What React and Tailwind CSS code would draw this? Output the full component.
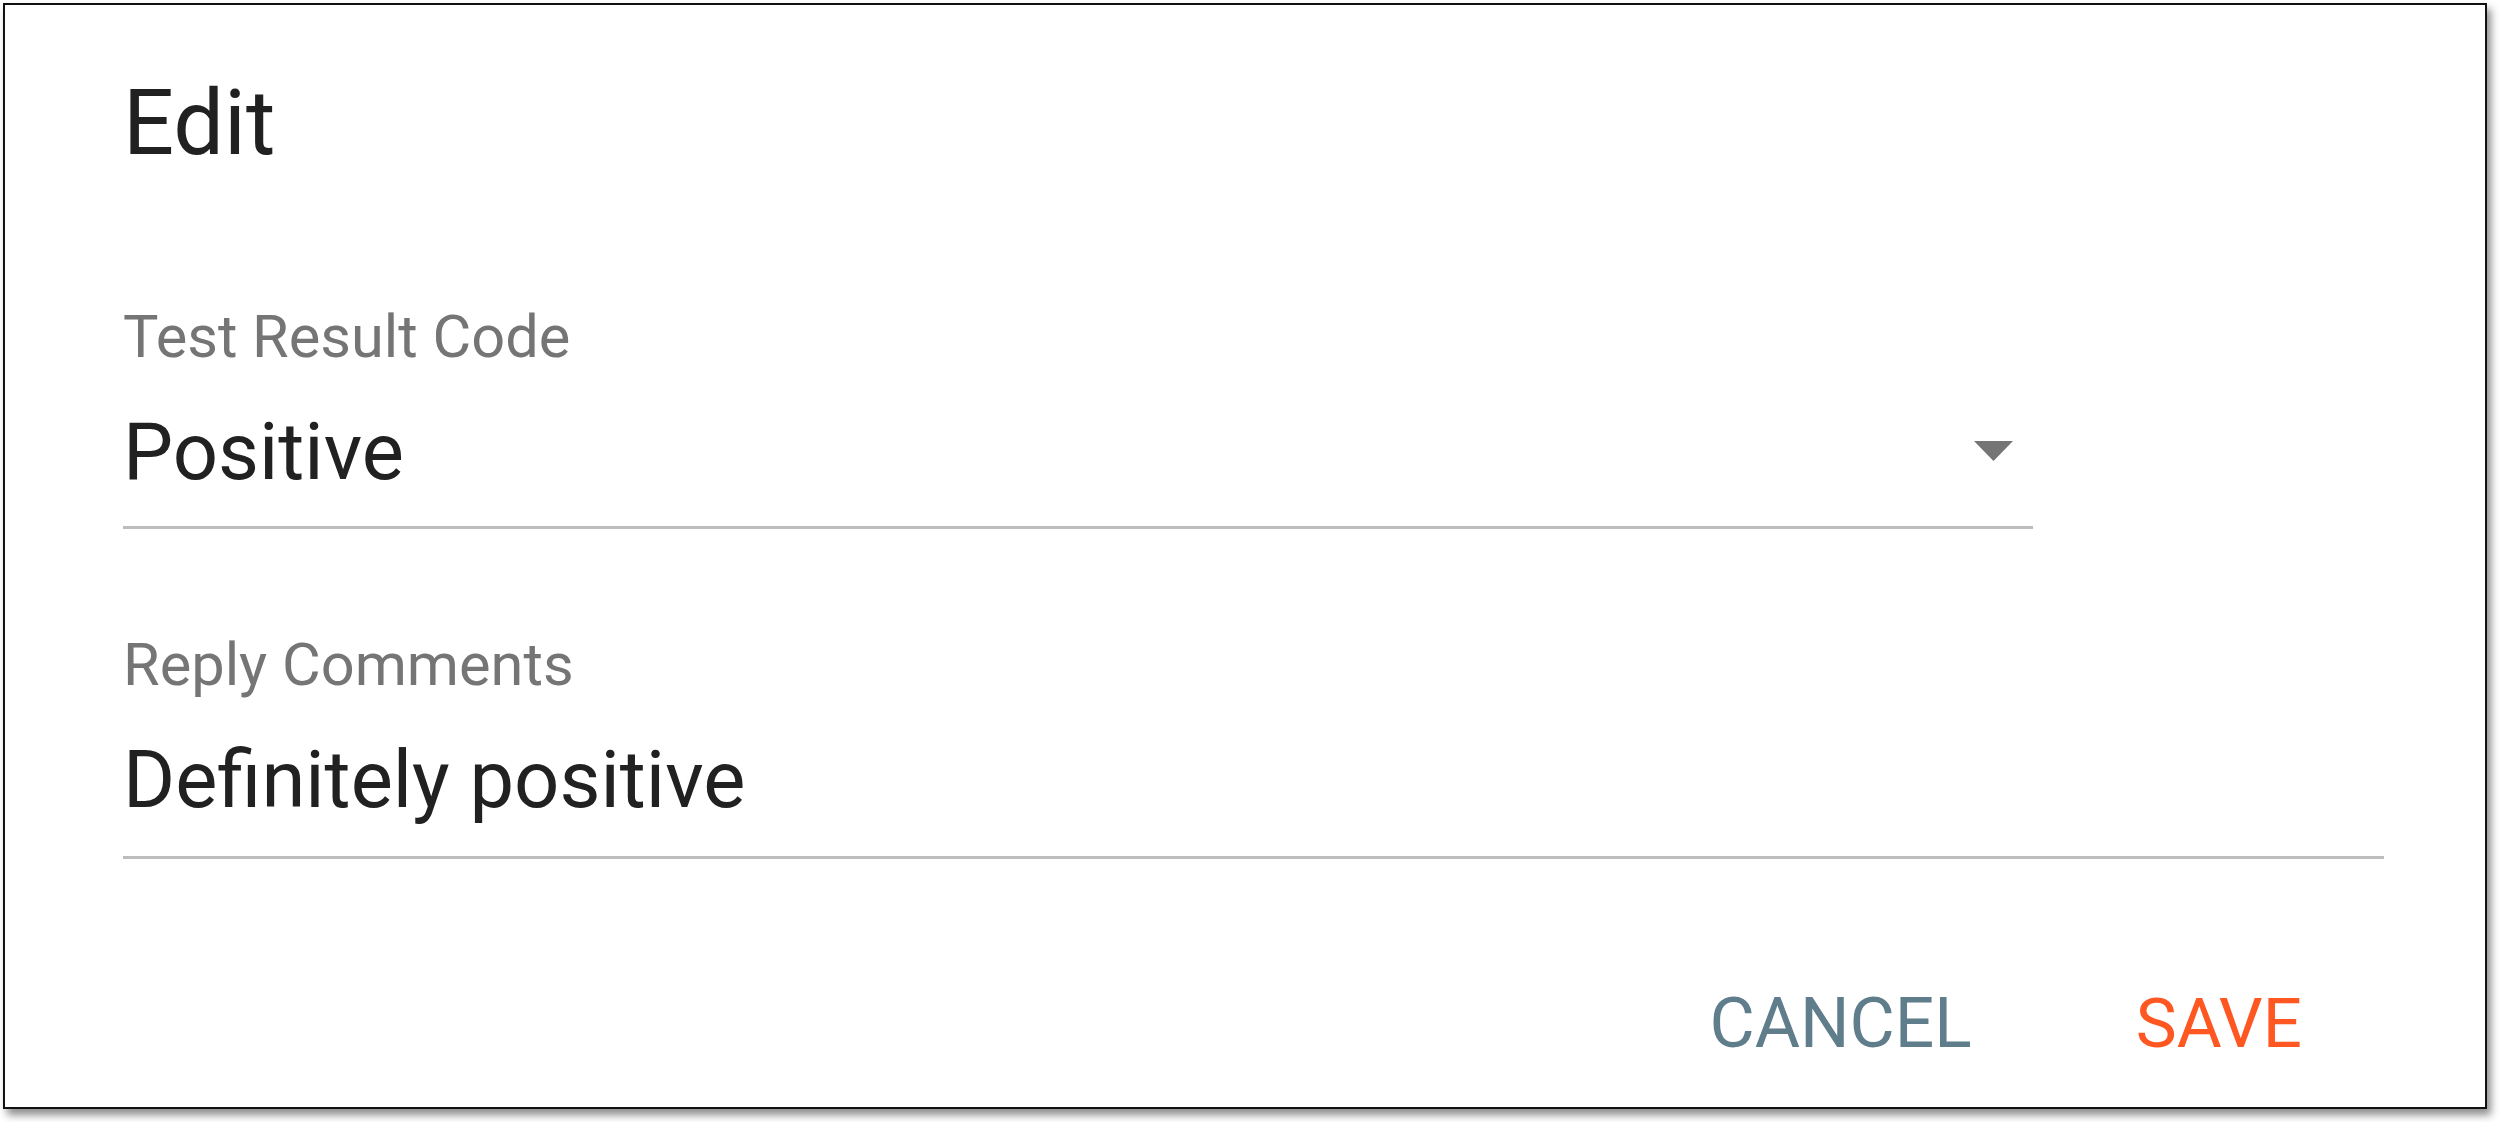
export default function App() {
  return (
    <div className="w-[2500px] h-[1122px] bg-white pl-[3px] pt-[3px] font-['Roboto',sans-serif]">
      <div className="w-[2484px] h-[1106px] border-2 border-[#111] bg-white shadow-[4px_6px_8px_rgba(0,0,0,0.45)] pl-[118px] flex flex-col">
        <h2 className="mt-[74px] text-[90px] leading-none text-[#212121]">Edit</h2>

        <div className="mt-[139px] w-[1910px] flex flex-col">
          <label className="text-[59.5px] leading-none text-[#757575]">Test Result Code</label>
          <div className="mt-[44px] flex items-center justify-between">
            <span className="text-[79.5px] leading-none text-[#212121]">Positive</span>
            <svg width="39" height="20" viewBox="0 0 39 20" className="mr-[20px]">
              <path d="M0 0 H39 L19.5 20 Z" fill="#757575" />
            </svg>
          </div>
          <div className="mt-[35px] h-[3px] bg-[#bdbdbd]" />
        </div>

        <div className="mt-[107px] w-[2261px] flex flex-col">
          <label className="text-[59.5px] leading-none text-[#757575]">Reply Comments</label>
          <span className="mt-[44px] text-[79.5px] leading-none text-[#212121]">Definitely positive</span>
          <div className="mt-[37px] h-[3px] bg-[#bdbdbd]" />
        </div>

        <div className="mt-[130px] flex justify-end gap-[164px] pr-[183px]">
          <button className="text-[69.5px] leading-none text-[#607d8b]">CANCEL</button>
          <button className="text-[69px] leading-none text-[#ff5722]">SAVE</button>
        </div>
      </div>
    </div>
  );
}
